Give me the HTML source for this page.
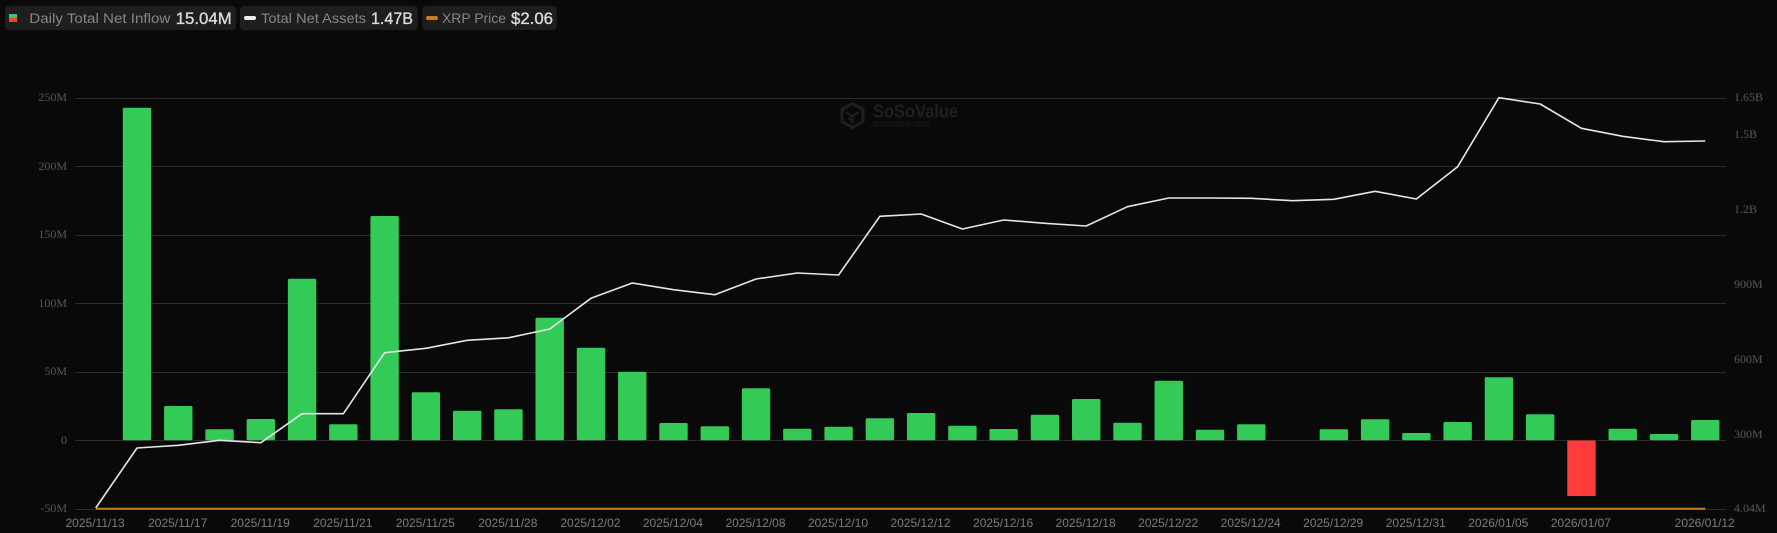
<!DOCTYPE html>
<html lang="en">
<head>
<meta charset="utf-8">
<title>XRP ETF Daily Total Net Inflow</title>
<style>
html,body{margin:0;padding:0;background:#0a0a0a;width:1777px;height:533px;overflow:hidden}
svg{display:block}
.lab{font-family:"Liberation Sans",sans-serif;font-size:14px;fill:#868686}
.val{font-family:"Liberation Sans",sans-serif;font-size:17px;fill:#dcdcdc;stroke:#dcdcdc;stroke-width:.35px}
.ax{font-family:"Liberation Serif",serif;font-size:12px;fill:#585858}
.dt{font-family:"Liberation Sans",sans-serif;font-size:12px;fill:#7c7c7c;text-anchor:middle}
</style>
</head>
<body>
<svg width="1777" height="533" viewBox="0 0 1777 533" xmlns="http://www.w3.org/2000/svg">
<defs>
<pattern id="dots" width="4" height="4" patternUnits="userSpaceOnUse"><rect width="4" height="4" fill="#090909"/><rect x="1" y="1" width="1" height="1" fill="#0b0b0b"/><rect x="3" y="3" width="1" height="1" fill="#0b0b0b"/></pattern>
</defs>
<rect width="1777" height="533" fill="url(#dots)"/>

<!-- legend -->
<rect x="5" y="6" width="231" height="24" rx="4" fill="#1e1e1e"/>
<rect x="9" y="14" width="8" height="4" fill="#34cc5a"/>
<rect x="9" y="18" width="8" height="4" fill="#ff3b3b"/>
<text class="lab" x="29.3" y="23" textLength="141" lengthAdjust="spacingAndGlyphs">Daily Total Net Inflow</text>
<text class="val" x="175.7" y="24" textLength="56" lengthAdjust="spacingAndGlyphs">15.04M</text>
<rect x="240" y="6" width="177.7" height="24" rx="4" fill="#1e1e1e"/>
<rect x="244" y="16" width="12" height="4" rx="2" fill="#eeeeee"/>
<text class="lab" x="261" y="23" textLength="105" lengthAdjust="spacingAndGlyphs">Total Net Assets</text>
<text class="val" x="371" y="24" textLength="42" lengthAdjust="spacingAndGlyphs">1.47B</text>
<rect x="422.3" y="6" width="134.4" height="24" rx="4" fill="#1e1e1e"/>
<rect x="426" y="16" width="12" height="4" rx="2" fill="#c67f1e"/>
<text class="lab" x="442" y="23" textLength="64" lengthAdjust="spacingAndGlyphs">XRP Price</text>
<text class="val" x="511" y="24" textLength="42" lengthAdjust="spacingAndGlyphs">$2.06</text>

<!-- grid -->
<g stroke="#2b2b2b" stroke-width="1">
<line x1="75" x2="1726" y1="98.5" y2="98.5"/>
<line x1="75" x2="1726" y1="166.5" y2="166.5"/>
<line x1="75" x2="1726" y1="235.5" y2="235.5"/>
<line x1="75" x2="1726" y1="303.5" y2="303.5"/>
<line x1="75" x2="1726" y1="372.5" y2="372.5"/>
<line x1="75" x2="1726" y1="440.5" y2="440.5"/>
<line x1="75" x2="1726" y1="509.5" y2="509.5"/>
</g>

<!-- watermark -->
<g fill="none" stroke="#1f1f1f" stroke-width="3">
<path d="M852.5 103.5 L863 109.3 V121.7 L852.5 127.5 L842 121.7 V109.3 Z"/>
<path d="M846 112.5 L852.5 116 L859 112.5 M852.5 116 V123 M848 118.5 L852 120.5" stroke-width="2"/>
</g>
<text x="873" y="117.5" font-family="Liberation Sans,sans-serif" font-weight="700" font-size="18" fill="#1f1f1f" textLength="85" lengthAdjust="spacingAndGlyphs">SoSoValue</text>
<text x="873" y="127" font-family="Liberation Sans,sans-serif" font-size="10" fill="#1c1c1c" textLength="57" lengthAdjust="spacingAndGlyphs">sosovalue.com</text>

<!-- bars -->
<g fill="#33ca58">
<rect x="122.8" y="107.7" width="28.4" height="332.6" rx="1.5"/>
<rect x="164.07" y="406" width="28.4" height="34.3" rx="1.5"/>
<rect x="205.34" y="429.3" width="28.4" height="11" rx="1.5"/>
<rect x="246.61" y="419" width="28.4" height="21.3" rx="1.5"/>
<rect x="287.88" y="278.7" width="28.4" height="161.6" rx="1.5"/>
<rect x="329.15" y="424.3" width="28.4" height="16" rx="1.5"/>
<rect x="370.42" y="216" width="28.4" height="224.3" rx="1.5"/>
<rect x="411.69" y="392.3" width="28.4" height="48" rx="1.5"/>
<rect x="452.96" y="410.7" width="28.4" height="29.6" rx="1.5"/>
<rect x="494.23" y="409.3" width="28.4" height="31" rx="1.5"/>
<rect x="535.5" y="317.7" width="28.4" height="122.6" rx="1.5"/>
<rect x="576.77" y="347.7" width="28.4" height="92.6" rx="1.5"/>
<rect x="618.04" y="371.7" width="28.4" height="68.6" rx="1.5"/>
<rect x="659.31" y="423" width="28.4" height="17.3" rx="1.5"/>
<rect x="700.58" y="426.3" width="28.4" height="14" rx="1.5"/>
<rect x="741.85" y="388.3" width="28.4" height="52" rx="1.5"/>
<rect x="783.12" y="428.7" width="28.4" height="11.6" rx="1.5"/>
<rect x="824.39" y="426.7" width="28.4" height="13.6" rx="1.5"/>
<rect x="865.66" y="418.3" width="28.4" height="22" rx="1.5"/>
<rect x="906.93" y="413" width="28.4" height="27.3" rx="1.5"/>
<rect x="948.2" y="425.7" width="28.4" height="14.6" rx="1.5"/>
<rect x="989.47" y="429" width="28.4" height="11.3" rx="1.5"/>
<rect x="1030.74" y="414.7" width="28.4" height="25.6" rx="1.5"/>
<rect x="1072.01" y="399" width="28.4" height="41.3" rx="1.5"/>
<rect x="1113.28" y="422.7" width="28.4" height="17.6" rx="1.5"/>
<rect x="1154.55" y="380.7" width="28.4" height="59.6" rx="1.5"/>
<rect x="1195.82" y="429.7" width="28.4" height="10.6" rx="1.5"/>
<rect x="1237.09" y="424.3" width="28.4" height="16" rx="1.5"/>
<rect x="1319.63" y="429.3" width="28.4" height="11" rx="1.5"/>
<rect x="1360.9" y="419.3" width="28.4" height="21" rx="1.5"/>
<rect x="1402.17" y="433" width="28.4" height="7.3" rx="1.5"/>
<rect x="1443.44" y="422" width="28.4" height="18.3" rx="1.5"/>
<rect x="1484.71" y="377.3" width="28.4" height="63" rx="1.5"/>
<rect x="1525.98" y="414.3" width="28.4" height="26" rx="1.5"/>
<rect x="1608.52" y="428.7" width="28.4" height="11.6" rx="1.5"/>
<rect x="1649.79" y="434" width="28.4" height="6.3" rx="1.5"/>
<rect x="1691.06" y="420" width="28.4" height="20.3" rx="1.5"/>
</g>
<rect x="1567.25" y="440.5" width="28.4" height="55.5" fill="#ff3b3b"/>

<!-- orange line -->
<line x1="96" x2="1705.3" y1="508.8" y2="508.8" stroke="#c67f1e" stroke-width="2"/>

<!-- white line -->
<polyline fill="none" stroke="#e6e6e6" stroke-width="1.6" stroke-linejoin="round" points="95.7,508 137,448 178.27,445.3 219.54,440.3 260.81,442.7 302.08,413.7 343.35,413.7 384.62,352.7 425.89,348.3 467.16,340.3 508.43,337.8 549.7,329 590.97,298.3 632.24,283 673.51,289.7 714.78,294.7 756.05,279 797.32,273 838.59,275 879.86,216.3 921.13,214 962.4,229 1003.67,220 1044.94,223.3 1086.21,226 1127.48,206.7 1168.75,198 1210.02,198 1251.29,198.3 1292.56,200.7 1333.83,199.3 1375.1,191.3 1416.37,199 1457.64,166.7 1498.91,97.7 1540.18,104 1581.45,128.3 1622.72,136.3 1663.99,141.7 1705.26,141"/>

<!-- left axis -->
<g class="ax" text-anchor="end">
<text class="ax" x="67" y="101" text-anchor="end">250M</text>
<text class="ax" x="67" y="170" text-anchor="end">200M</text>
<text class="ax" x="67" y="238" text-anchor="end">150M</text>
<text class="ax" x="67" y="307" text-anchor="end">100M</text>
<text class="ax" x="67" y="375" text-anchor="end">50M</text>
<text class="ax" x="67" y="444" text-anchor="end">0</text>
<text class="ax" x="67" y="512" text-anchor="end">-50M</text>
</g>

<!-- right axis -->
<text class="ax" x="1734" y="101">1.65B</text>
<text class="ax" x="1734" y="138">1.5B</text>
<text class="ax" x="1734" y="213">1.2B</text>
<text class="ax" x="1734" y="288">900M</text>
<text class="ax" x="1734" y="363">600M</text>
<text class="ax" x="1734" y="438">300M</text>
<text class="ax" x="1734" y="512">4.04M</text>

<!-- x axis -->
<g transform="translate(-0.6 0)">
<text class="dt" x="95.7" y="527">2025/11/13</text>
<text class="dt" x="178.3" y="527">2025/11/17</text>
<text class="dt" x="260.8" y="527">2025/11/19</text>
<text class="dt" x="343.4" y="527">2025/11/21</text>
<text class="dt" x="425.9" y="527">2025/11/25</text>
<text class="dt" x="508.4" y="527">2025/11/28</text>
<text class="dt" x="591" y="527">2025/12/02</text>
<text class="dt" x="673.5" y="527">2025/12/04</text>
<text class="dt" x="756.1" y="527">2025/12/08</text>
<text class="dt" x="838.6" y="527">2025/12/10</text>
<text class="dt" x="921.1" y="527">2025/12/12</text>
<text class="dt" x="1003.7" y="527">2025/12/16</text>
<text class="dt" x="1086.2" y="527">2025/12/18</text>
<text class="dt" x="1168.8" y="527">2025/12/22</text>
<text class="dt" x="1251.3" y="527">2025/12/24</text>
<text class="dt" x="1333.8" y="527">2025/12/29</text>
<text class="dt" x="1416.4" y="527">2025/12/31</text>
<text class="dt" x="1498.9" y="527">2026/01/05</text>
<text class="dt" x="1581.5" y="527">2026/01/07</text>
<text class="dt" x="1705.3" y="527">2026/01/12</text>
</g>
</svg>
</body>
</html>
